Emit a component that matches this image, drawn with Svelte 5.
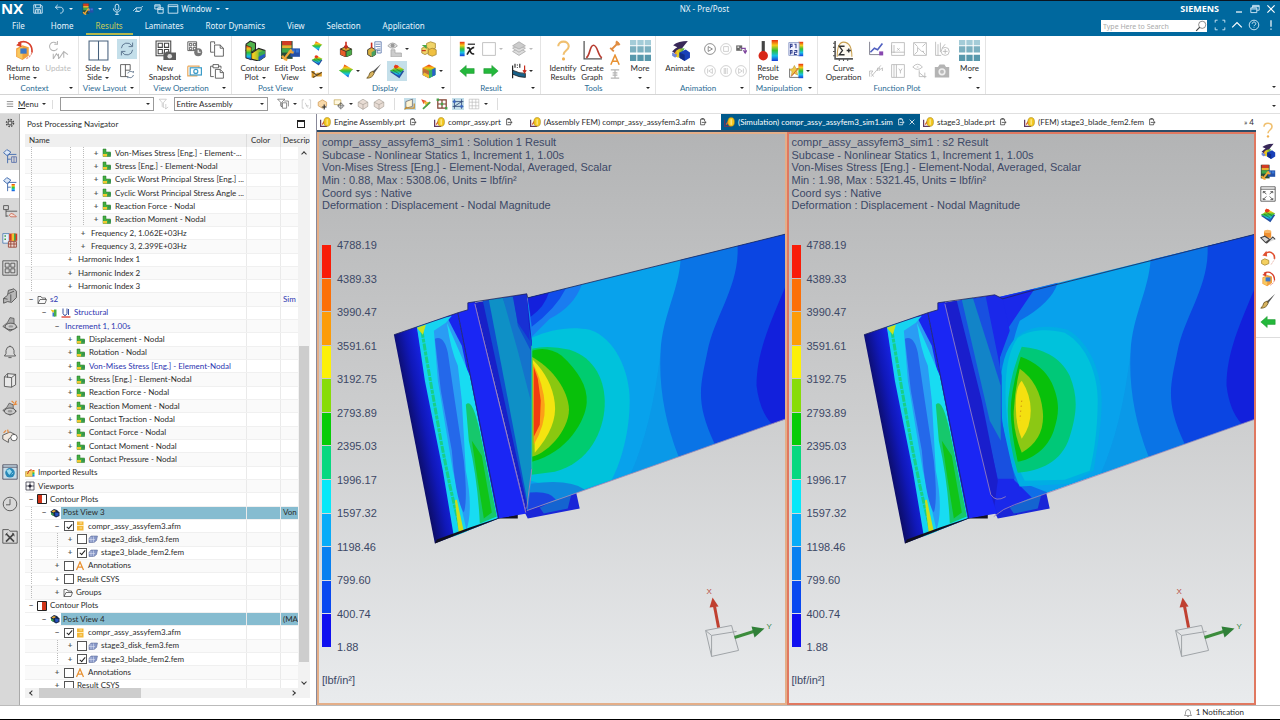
<script>
	const icons = {
		// title bar
		save: '<path class="w" d="M3 3h12l2 2v12H3zM6 3v5h8V3M6 17v-6h8v6M8 13h4M8 15h4"/>',
		undo: '<path class="w" d="M8 3L4 7l4 4M4 7h8c4 0 5 3 5 5s-1 5-5 5"/>',
		mic: '<rect class="w" x="7" y="2" width="6" height="10" rx="3"/><path class="w" d="M4 9c0 8 12 8 12 0M10 15v4M7 19h6"/>',
		touch: '<path class="w" d="M2 13l5-5h8l3-3M7 8c-1 8 8 8 9 1M5 14h7"/>',
		windows: '<path class="w" d="M3 3h9v7H3zM3 5h9M8 8h9v9H8zM8 11h9"/>',
		window: '<path class="w" d="M2 3h16v14H2zM2 6h16"/>',
		restore: '<path class="w" d="M3 8h10v8H3zM6 8V4h11v8h-4M3 10h10M6 6h11"/>',
		close: '<path class="w2" d="M4 4l12 12M16 4L4 16"/>',
		minimize: '<path class="w2" d="M5 15h10"/>',
		full: '<path class="w" d="M2 6V2h4M14 2h4v4M18 14v4h-4M6 18H2v-4"/>',
		up: '<path class="w2" d="M2 14l8-8 8 8"/>',
		help: '<circle class="w" cx="10" cy="10" r="8"/><path class="w" d="M7 8c0-4 6-4 6 0 0 2-3 2-3 4M10 14v1"/>',
		alert: '<path class="w2" d="M10 2v11M10 16v2"/>',
		search: '<circle class="k" cx="12" cy="8" r="6"/><path class="k" stroke-width="2" d="M8 12l-6 6"/>',
		// ribbon
		home: '<path d="M3 8l6-3 6 2v8l-6 4-6-3z" fill="#f2a03c"/><path d="M4 9l5-3v12l-5-2z" fill="#f8c860"/><path d="M7 8h6v5H7z" fill="#3c78c8"/><path d="M5 3c7-4 14 1 13 9" fill="none" stroke="#d8402c" stroke-width="1.6"/><path d="M3 5l5-4v6z" fill="#d8402c"/><path d="M18 12c-1 3-3 5-6 6" fill="none" stroke="#e89080" stroke-width="1.2" stroke-dasharray="2 1"/>',
		update: '<path class="g" d="M8 3A4 4 0 1 0 9 8M9 1v3H6M5 18l3-5 3 4 4-6 4 3M5 13v5M10 13v5M15 11v6"/>',
		side: '<path class="b" d="M1 1h18v18H1zM10 1v18"/>',
		refresh: '<path class="b" d="M3 9a7 7 0 0 1 13-3M17 2v5h-5M17 11a7 7 0 0 1-13 3M3 18v-5h5"/>',
		layout: '<path class="k" d="M11 17H2V2h12v7M8 2v15M8 9h6"/><path class="b" d="M11 13c1-3 5-3 7-1v-2M18 15c-1 4-5 4-7 2v2"/>',
		snapshot: '<path class="k" d="M1 1h14v14H1zM3 3h4v4H3zM9 3h4v4H9zM3 9h4v4H3zM9 9h4v4H9z"/><path d="M8 12h2l1-1h3l1 1h5v7H8z" fill="#5c5c5c"/><circle cx="14" cy="15.500" r="2.200" fill="#ddd"/>',
		gridclock: '<path class="k" d="M1 1h11v11H1zM3 3h3v3H3zM8 3h3v3H8zM3 8h3v3H3zM8 8h3v3H8z"/><circle cx="14" cy="14" r="5" fill="#777"/><path d="M14 11v3h3" fill="none" stroke="#fff" stroke-width="1.400"/>',
		camframe: '<path d="M1 4h14v2M1 4v12h12" fill="none" stroke="#e8a85c" stroke-width="1.500"/><rect x="4" y="6" width="14" height="9" fill="#fff" stroke="#3c9cc8" stroke-width="1.500"/><circle cx="11" cy="10.500" r="2.500" fill="none" stroke="#3c9cc8" stroke-width="1.500"/>',
		copy: '<path class="k" d="M7 4V1H2v13h4M7 5h7l4 4v10H7zM14 5v4h4"/>',
		paste: '<path class="k" d="M6 17H2V4h3M12 4h3v3M5 2h7v4H5zM8 8h6l4 4v7H8zM14 8v4h4"/>',
		contour: '<path d="M1 4l4-3 5 2v6l-4 3-5-2z" fill="#52b44c" stroke="#222"/><path d="M1 10l6 2 6-4 6 2v6l-6 4-12-3z" fill="url(#hot)" stroke="#222"/><path d="M1 5l5 2v12l-5-2z" fill="url(#rain)" stroke="#222" stroke-width=".6"/><path d="M13 12l6-2v6l-6 4z" fill="#38a850"/><path d="M13 20v-4l6-3v3z" fill="#2458c8"/>',
		edit: '<path d="M1 1h11v17H1z" fill="#284c3c"/><path d="M2 1h9v4H2z" fill="#d03c24"/><path d="M2 5h9v3H2z" fill="#e8b030"/><path d="M2 8h9v4H2z" fill="#40a848"/><path d="M10 8h9v8h-9z" fill="#2450a8"/><path d="M11 9h3v3h-3zM15 9h3v3h-3z" fill="#3878d8"/><path d="M11 9L4 18M4 18l-2-3M4 18l3 1M8 11l5 1" stroke="#f0a838" stroke-width="2.200" fill="none"/>',
		surf: '<path d="M1 9q5 0 7-7l11 6q-4 2-6 10z" fill="url(#rain)"/>',
		surfdark: '<path d="M1 11l12 8 6-9-6-3z" fill="#2450a0"/><path d="M1 9q5 0 7-7l11 6q-4 2-6 9z" fill="url(#rain)"/><path d="M5 9l8 5M7 6l8 5" stroke="#305030" stroke-width=".7"/><ellipse cx="9" cy="4.500" rx="3" ry="2" fill="#e83c1c"/>',
		tools: '<path d="M1 5h5v11H1zM9 8h9v6H9z" fill="#d89828"/><path d="M1 6l9 6 8-5M3 16l7-4" stroke="#604820" stroke-width="2" fill="none"/>',
		box: '<path d="M3 10l7-3 7 3v7l-7 3-7-3z" fill="#d8a830" stroke="#222"/><path d="M10 13v7l-7-3v-7z" fill="#e85c28"/><path d="M10 13v7l7-3v-7z" fill="#48a848"/><path d="M3 10l7 3 7-3M10 13v7" stroke="#222" fill="none"/><path d="M10 1v7M8 6l2 3 2-3" stroke="#c82c1c" stroke-width="2" fill="none"/>',
		boxlist: '<path d="M2 11l5-3 5 3v6l-5 3-5-3z" fill="#d8b040" stroke="#222"/><path d="M7 14v6l5-3v-6z" fill="#48a060"/><path d="M7 2v7" stroke="#c82c1c" stroke-width="2"/><path d="M11 1h8v14h-5v-4h-3z" fill="#fff" stroke="#5070a8"/><path d="M12 4h6M12 7h6M14 10h4M14 12h4" stroke="#5070a8"/>',
		eyebox: '<path d="M1 6q6-7 12 0-6 6-12 0z" fill="#e4e4e4" stroke="#999"/><circle cx="7" cy="5.500" r="2.500" fill="#999"/><path d="M5 11h5v4h8v5H5z" fill="#ccc" stroke="#aaa"/>',
		cubes: '<path d="M7 3l5-2 6 2v6l-6 2-5-2z" fill="#f0d468" stroke="#a88830"/><path d="M9 11l5-2 5 2v6l-5 2-5-2z" fill="#f0c040" stroke="#a88830"/><path d="M1 9l4-2 4 2v6l-4 2-4-2z" fill="#f0d468" stroke="#a88830"/><path d="M1 5l6 5v-5z" fill="#48a848"/><path d="M1 12h5" stroke="#c83c1c" stroke-width="1.500"/>',
		brush: '<path d="M19 1L8 11l2 2z" fill="#555"/><path d="M9 10L5 12q-1 4-4 7 7 0 9-6z" fill="#d8b460" stroke="#665020"/>',
		cube: '<path d="M2 6l8-4 8 4v9l-8 4-8-4z" fill="url(#rain)"/><path d="M2 6l8 4v9l-8-4z" fill="#e85030" opacity=".75"/><path d="M10 10l8-4v9l-8 4z" fill="#38b060"/><path d="M4 12l6 3v4l-8-4z" fill="#f0c030"/><path d="M14 8l4-2v9l-4 2z" fill="#2860c8"/>',
		xbar: '<path d="M1 1h6v18H1z" fill="url(#rain)"/><path d="M11 4h9" stroke="#222" stroke-width="1.500"/><path d="M10 9q3-2 4 3t5 4M19 8q-4 0-9 9" stroke="#222" stroke-width="2" fill="none"/>',
		square: '<path class="g" d="M2 2h16v16H2z"/>',
		layers: '<path d="M2 13l8-4 8 4-8 5z" fill="#ddd" stroke="#aaa"/><path d="M2 9l8-4 8 4-8 5z" fill="#ddd" stroke="#aaa"/><path d="M2 6l8-5 8 5-8 4z" fill="#ccc" stroke="#aaa"/>',
		left: '<path d="M1 10l8-7v4h10v6H9v4z" fill="#24b83c" stroke="#189028" stroke-width=".6"/>',
		right: '<path d="M19 10l-8-7v4H1v6h10v4z" fill="#24b83c" stroke="#189028" stroke-width=".6"/>',
		beam: '<path d="M2 3v16" stroke="#222" stroke-width="1.500"/><path d="M2 9q8 4 16 4v5q-8 0-16-4z" fill="#186088" stroke="#222"/><path d="M5 1v5M8 2v1M8 5v1M11 1v5" stroke="#333" stroke-width="1.500"/><path d="M17 3v8M15 9l2 3 2-3" stroke="#c82c1c" stroke-width="1.500" fill="none"/>',
		question: '<path d="M5 6c0-6 10-6 10 0 0 4-5 4-5 8" fill="none" stroke="#f0c070" stroke-width="2"/><circle cx="10" cy="18" r="1.500" fill="#f0b050"/>',
		graph: '<path d="M2 1v17h17" fill="none" stroke="#555" stroke-width="1.200"/><path d="M4 17C8 15 7 5 11 5s4 10 8 12" fill="none" stroke="#b83c30" stroke-width="1.600"/>',
		measure: '<path d="M5 15L15 5M2 13l6 6M12 2l6 6M11 5l4 0v4" fill="none" stroke="#e08c40" stroke-width="3"/>',
		letter: '<path d="M3 18l7-16 7 16M6 12h8" fill="none" stroke="#e89030" stroke-width="2.500"/>',
		ibeam: '<path class="g" stroke-width="2" d="M3 3h14M3 17h14M10 3v14M6 8h8M6 12h8"/>',
		more: '<path d="M0 0h6v5H0zM7 0h6v5H7zM14 0h6v5h-6z" fill="#a4ccd8"/><path d="M0 6h6v6H0zM7 6h6v6H7zM14 6h6v6h-6z" fill="#7cb0c0"/><path d="M0 14h6v6H0zM7 14h6v6H7zM14 14h6v6h-6z" fill="#5898ac"/>',
		animate: '<path d="M3 5q5-4 14-4l-4 5-6 8-5-3q3-3 5-4z" fill="#382858"/><path d="M6 10q4-3 8-2l-6 9-5-2z" fill="url(#hot)"/><path d="M2 12l5 2-2 3-3-2z" fill="#7088d8"/><path d="M9 12l6-3 4 3v5l-5 3-5-3z" fill="#1840b8"/><path d="M9 12l5 2v6l-5-3z" fill="#102c88"/>',
		play: '<circle class="k" cx="10" cy="10" r="9"/><path class="k" d="M7 6l7 4-7 4z"/>',
		stop: '<circle class="g" cx="10" cy="10" r="9"/><path class="g" d="M6 6h8v8H6z"/>',
		film: '<path d="M2 4h10v9H2z" fill="#666"/><path d="M4 6h3v2H4zM8 9h3v2H8z" fill="#fff"/><path d="M10 9h7v6M14 12l3 5 3-5" stroke="#8048a0" stroke-width="2" fill="none"/>',
		prev: '<circle class="g" cx="10" cy="10" r="9"/><path class="g" d="M6 6v8M14 6l-6 4 6 4z"/>',
		pause: '<circle class="g" cx="10" cy="10" r="9"/><path class="g" d="M7 5v10M9 5v10M12 5v10"/>',
		next: '<circle class="g" cx="10" cy="10" r="9"/><path class="g" d="M14 6v8M6 6l6 4-6 4z"/>',
		probe: '<path d="M13 0h6v20h-6z" fill="url(#rain)"/><path d="M5 1v12" stroke="#444" stroke-width="3"/><circle cx="5" cy="15" r="4.500" fill="#d82818"/>',
		pfilter: '<path d="M13 1h6v18h-6z" fill="url(#rain)"/><path d="M1 2h13v16H1z" fill="#f4f4ff" stroke="#8090c0"/><path d="M3 9V4h2v3H3M8 4h2v5M3 17v-5h2v3H3M8 12h3v2H8v3h3" stroke="#304090" stroke-width="1.300" fill="none"/>',
		pstar: '<path d="M13 1h6v18h-6z" fill="url(#rain)"/><path d="M2 7v11h12" stroke="#555" fill="none"/><path d="M8 3l2 4 4 0-3 3 1 5-4-2-4 3 1-5-3-3 4-1z" fill="#f0c848" stroke="#a88828" stroke-width=".6"/><path d="M4 17l9-11" stroke="#c84c28"/>',
		curve: '<path d="M2 1v17h17" fill="none" stroke="#555" stroke-width="1.500"/><path d="M0 3h2M0 7h2M0 11h2M0 15h2M6 18v2M10 18v2M14 18v2" stroke="#555"/><path d="M4 16C4 8 5 2 10 2s8 4 8 14" fill="#fffaf0" stroke="#c8a050"/><path d="M11 6H6l3 4-3 4h5M13 10h4M15 8v4" fill="none" stroke="#333" stroke-width="1.300"/>',
		trend: '<path d="M2 1v16h16" fill="none" stroke="#667"/><path d="M3 14l5-5 4 2 6-8" fill="none" stroke="#5060c0" stroke-width="2"/><path d="M14 13h5v5h-5z" fill="#8848b0"/>',
		boxx: '<path class="g" d="M2 2h16v16H2zM2 5v10M5 5v10M2 14h16M9 9l3 3M12 9l-3 3"/>',
		boxn: '<path class="g" d="M2 2h16v16H2zM3 3l4 4M17 3l-4 4M3 17l4-4M17 17l-4-4M7 13V8l5 5h3"/>',
		drop: '<path class="g" d="M2 1v17h7M5 4v14M8 2v12M14 4l-4 5"/><circle class="g" cx="14" cy="13" r="5"/><path class="g" d="M14 10v6M11 13h6"/>',
		ratio: '<path class="g" d="M4 17L16 3M2 17v-7h4l-2 3 3 4M12 10V6M14 10V6l2 2 2-2v4"/>',
		boxy: '<path class="g" d="M2 2h16v16H2zM5 2v16M8 2v16M11 7l2 3 2-3M13 10v3"/>',
		eyeaxis: '<path class="g" d="M1 5q6-7 12 0-6 6-12 0zM6 5h2M9 9v8h9M9 12l6 5M16 12v7"/>',
		camera: '<path d="M1 5h4l2-3h6l2 3h4v13H1z" fill="#b4b4b4"/><circle cx="10" cy="11" r="4.500" fill="#eee"/><circle cx="10" cy="11" r="2.500" fill="#bbb"/>',
		// selection bar
		burger: '<path class="k" stroke-width="1.500" d="M2 4h16M2 10h16M2 16h16"/>',
		funnel: '<path class="g" d="M2 2h12l-5 6v8l-2-2V8zM13 10v8M11 16l2 2 4-3"/>',
		funnel2: '<path class="k" d="M1 2h12l-5 5v8l-2-2V7zM9 8h7v9H9zM12 5h7v9"/>',
		bracket: '<path class="g" d="M5 3H2v14h3M13 3h3v14h-3M7 8l4 8M8 13h5"/>',
		ocube: '<path d="M2 7l7-4 7 4v6l-7 4-7-4z" fill="#f8d8a8" stroke="#c88838"/><path d="M12 11v8M8 15h8" stroke="#333" stroke-width="2"/>',
		target: '<path d="M2 3h11v8H2z" fill="#fff8e0" stroke="#b89838"/><circle class="k" cx="13" cy="13" r="4"/><path class="k" d="M13 7v12M7 13h12"/>',
		gcube: '<path d="M2 7l8-5 8 5v7l-8 5-8-5z" fill="#e8dcd4" stroke="#a09890"/><path d="M2 7l8 4 8-4M10 11v8" stroke="#a09890" fill="none"/>',
		sketch: '<path d="M3 17V6l11-4v12z" fill="#fdf4d4" stroke="#445"/><path d="M3 17h14V9M1 19l4-4" stroke="#c88c28" stroke-width="2" fill="none"/>',
		pen: '<path d="M2 2l9 3-5 5z" fill="#e85030"/><path d="M6 6l11 1-6 8z" fill="#f0c040"/><path d="M5 18l12-11" stroke="#48a048" stroke-width="3"/>',
		redgrid: '<path d="M3 3h14v14H3zM3 10h14M10 3v14" stroke="#804030" stroke-width="2" fill="none"/><path d="M1 1h4v4H1zM8 8h4v4H8zM15 15h4v4h-4z" fill="#48a048"/>',
		nodes: '<path d="M4 2v16M16 2v16M1 6h18M1 14h18M4 14l12-8" stroke="#304878" stroke-width="1.400" fill="none"/><path d="M2 4h4v4H2zM14 12h4v4h-4z" fill="#3868c8"/>',
		dots: '<path class="g" d="M2 2h16v16H2zM7 2v16M13 2v16M2 7h16M2 13h16"/>',
		// document tabs
		doc: '<path d="M1 5v12h12" stroke="#603860" stroke-width="2.500" fill="none"/><path d="M4 14l4-6 3 4" stroke="#e06030" stroke-width="2.500" fill="none"/><ellipse cx="13" cy="9" rx="6" ry="8" fill="#f4c820" stroke="#a08018"/><path d="M13 4v10" stroke="#fff0a0" stroke-width="2"/>',
		modified: '<path fill="none" stroke="currentColor" stroke-width="1.800" d="M14 8V3H4v14h10v-3M7 11h10M14 8l4 3-4 3M7 3v-2h4v2"/>',
		// resource bar
		gear: '<circle class="k" stroke-width="2" cx="10" cy="10" r="4"/><circle class="k" cx="10" cy="10" r="7" stroke-width="3" stroke-dasharray="3 2.500"/>',
		nav: '<path d="M2 6l4-4 5 3-4 5z" fill="#dce8f8" stroke="#4870b0" stroke-width="1.200"/><path d="M7 9v10M7 8h11M7 14h4" fill="none" stroke="#4870b0" stroke-width="1.200"/><path d="M12 11h6v7h-6zM15 11v7" fill="none" stroke="#5068a8"/>',
		navpost: '<path d="M2 6l4-4 5 3-4 5z" fill="#dce8f8" stroke="#4870b0" stroke-width="1.200"/><path d="M7 9v10M7 8h11M7 14h4" fill="none" stroke="#4870b0" stroke-width="1.200"/><path d="M12 10h4v9h-4z" fill="url(#rain)"/>',
		navpart: '<path class="k" d="M2 2h6v5H2zM5 7v9M5 9h14M5 15h3"/><path d="M9 14q2-4 6-1l3 3h-7z" fill="#f4dcd4" stroke="#c86048"/>',
		palette: '<path d="M1 2h8v12H1z" fill="#e8f0f8" stroke="#4878b0"/><path d="M3 4h2v2H3zM3 8h2v2H3z" fill="#48a048"/><path d="M9 2h10v9H9z" fill="#d83820"/><path d="M12 2h3v9h-3z" fill="#f0c030"/><path d="M15 2h2v9h-2z" fill="#40a848"/><path d="M8 12h10v7H8zM11 12v7M15 12v7M8 15h10" fill="#f0d8d0" stroke="#903828"/>',
		tiles: '<path class="k" d="M1 1h18v18H1zM4 4h5v5H4zM11 4h5v5h-5zM4 11h5v5H4zM11 11h5v5h-5z"/>',
		parts: '<path d="M8 3l7-2 3 3v8l-6 6-5-1-5 2v-6l5-4z" fill="#b8b8b8" stroke="#444"/><path d="M8 7l7-3M11 8v9M2 13l5 1" stroke="#444" fill="none"/>',
		reuse: '<path d="M1 13Q8 9 10 2l5 1v8l4 3-9 5z" fill="#a8a8a8" stroke="#555"/><ellipse cx="11" cy="13" rx="7" ry="4" fill="#ccc" stroke="#444"/><ellipse cx="11" cy="13" rx="3" ry="1.500" fill="#999"/>',
		bell: '<path class="k" d="M10 2v1M3 15h14l-2-3V8q-1-5-5-5T5 8v4zM8 17h4"/>',
		book: '<path d="M3 6l4-4 10 1v13l-5 3-9-1zM3 6l9 1v12M12 7l5-4M7 2v5" fill="#e8e8e8" stroke="#444"/>',
		reuse2: '<path d="M1 13Q7 10 9 4l5 2v5l4 3-8 5z" fill="#b0b0b0" stroke="#555"/><ellipse cx="10" cy="14" rx="7" ry="4" fill="#ccc" stroke="#444"/><ellipse cx="10" cy="14" rx="3" ry="1.500" fill="#999"/><path d="M12 1l3 3M18 1l-2 4M14 6l5-1" stroke="#e88838" stroke-width="1.500"/>',
		lens: '<path d="M1 9l9-4 6 3-8 6v4l-7-4z" fill="#f0e8e0" stroke="#444"/><circle cx="15" cy="12" r="4" fill="#fff" stroke="#444"/><path d="M2 6l3-3M7 2l1 4" stroke="#e88838" stroke-width="1.500"/>',
		globe: '<path d="M1 1h18v18H1z" fill="#c8dce8" stroke="#445"/><path d="M1 4h18" stroke="#445"/><circle cx="10" cy="11" r="6" fill="#2888b8"/><path d="M6 8l4-1 2 3-3 3zM12 13l2-2" fill="#9cdcf0" stroke="#9cdcf0"/>',
		clock: '<circle class="k" cx="10" cy="10" r="8.500"/><path class="k" d="M10 4v7H5"/>',
		wrench: '<path class="k" d="M1 5V2h7l2 2h9v15H1z"/><path class="k" stroke-width="2" d="M5 7l10 10M15 7L5 17"/><path class="k" d="M13 6q0 3 3 4M4 9l3-3"/>',
		fit: '<path class="k" d="M1 1h18v18H1zM1 4h18M4 7l4 3M16 7l-4 3M4 17l4-4M16 17l-4-4M4 9V7h3M16 9V7h-3M4 15v2h3M16 15v2h-3"/>',
		cylinder: '<path d="M5 3h9v8H5z" fill="#f09030"/><ellipse cx="9.500" cy="3" rx="4.500" ry="2" fill="#f8b868"/><path d="M1 11l5-2 6 4-5 4zM8 18l8-8 3 3" fill="#d8d8d8" stroke="#444" stroke-width="1.300"/>',
		undocube: '<path d="M2 13l4-2 5 2v4l-5 2-4-2z" fill="#f4d060" stroke="#a88830"/><path d="M6 6c5-7 13-2 12 5" fill="none" stroke="#e05030" stroke-width="2"/><path d="M3 7l5-6 1 7z" fill="#e05030"/><path d="M18 12l-4 6" stroke="#c84c30" stroke-dasharray="1 2"/>',
		// tree
		result: '<path d="M2 2h6v6h9v9H2z" fill="#44b040" stroke="#207028"/><path d="M2 12h8v5H2z" fill="#f0c830"/><path d="M12 10h6v5h-6z" fill="#389050"/>',
		folder: '<path class="k" stroke-width="1.500" d="M2 17V3h6l2 3h7v3M2 17l4-8h13l-3 8z"/>',
		structural: '<path d="M1 3l8 2-3 5z" fill="#f0c020"/><path d="M5 9h5v8H5z" fill="#3c78d0"/><path d="M8 3h5v14H8z" fill="#48b048"/>',
		curveicon: '<path d="M4 1v10q4 8 8 0V1M15 2v12" fill="none" stroke="#3850a0" stroke-width="2"/><path d="M1 18h18" stroke="#d83020" stroke-width="2.500"/>',
		imported: '<path d="M1 7h7l2-2h5v12H1z" fill="#f4d060" stroke="#a88830"/><path d="M15 4h4v13h-4z" fill="url(#rain)"/><path d="M5 12q1-8 8-9" stroke="#c83828" stroke-width="2" fill="none"/>',
		viewports: '<path d="M2 2h16v16H2zM10 2v16M2 10h16" fill="none" stroke="#334" stroke-width="1.500"/><path d="M10 7v6M7 10h6" stroke="#223" stroke-width="3"/>',
		plotl: '<path d="M1 1h18v18H1z" fill="#fff" stroke="#222" stroke-width="2"/><path d="M2 2h8v16H2z" fill="#d03418"/>',
		plotr: '<path d="M1 1h18v18H1z" fill="#fff" stroke="#222" stroke-width="2"/><path d="M10 2h8v16h-8z" fill="#d03418"/>',
		postview: '<path d="M1 7l7-5 6 2 5 5v7l-7 3-8-5z" fill="#182848"/><path d="M3 7l5-3 4 2-5 3z" fill="#e8a830"/><path d="M2 9l5 2v5l-5-3z" fill="#38a050"/><path d="M10 9l7 1v5l-6 2z" fill="#2450c0"/>',
		afm: '<path d="M4 1h13v8H4zM4 10h13v9H4z" fill="#f4b838"/><path d="M4 9h13M9 4h5M9 14h5" stroke="#fff0c0" stroke-width="1.600"/>',
		fem: '<path d="M2 9l4-5h13l-2 9-5 4H2z" fill="#8898c8" stroke="#506090"/><path d="M2 11h12M6 6v10M11 5v12" stroke="#e8ecf8"/>'
	};

	const menus = ['File', 'Home', 'Results', 'Laminates', 'Rotor Dynamics', 'View', 'Selection', 'Application'];

	// text = large button, icon only = small button, stack = narrow column
	const groups = [
		{ id: 'context', label: 'Context', items: [{ icon: 'home', text: ['Return to', 'Home'], caret: true }, { icon: 'update', text: ['Update'], off: true }] },
		{ id: 'layout', label: 'View Layout', items: [{ icon: 'side', text: ['Side by', 'Side'], caret: true }, { icon: 'refresh', on: true }, { icon: 'layout' }] },
		{ id: 'operation', label: 'View Operation', items: [{ icon: 'snapshot', text: ['New', 'Snapshot'] }, { icon: 'gridclock' }, { icon: 'camframe' }, { icon: 'copy' }, { icon: 'paste' }] },
		{ id: 'post', label: 'Post View', items: [{ icon: 'contour', text: ['Contour', 'Plot'], caret: true }, { icon: 'edit', text: ['Edit Post', 'View'] }, { stack: ['surf', 'surfdark', 'tools'] }] },
		{
			id: 'display',
			label: 'Display',
			items: [{ icon: 'box' }, { icon: 'surf', caret: true }, { icon: 'boxlist' }, { icon: 'brush' }, { icon: 'eyebox', caret: true }, { icon: 'surfdark', on: true }, { icon: 'cubes' }, { icon: 'cube', caret: true }]
		},
		{ id: 'result', label: 'Result', items: [{ icon: 'xbar' }, { icon: 'left' }, { icon: 'square', caret: true, off: true }, { icon: 'right' }, { icon: 'layers', caret: true, off: true }, { icon: 'beam', caret: true }] },
		{
			id: 'tools',
			label: 'Tools',
			items: [{ icon: 'question', text: ['Identify', 'Results'] }, { icon: 'graph', text: ['Create', 'Graph'] }, { stack: ['measure', 'letter', 'ibeam'] }, { icon: 'more', text: ['More', ''], caret: true }]
		},
		{ id: 'animation', label: 'Animation', items: [{ icon: 'animate', text: ['Animate'] }, { icon: 'play' }, { icon: 'prev' }, { icon: 'stop' }, { icon: 'pause' }, { icon: 'film' }, { icon: 'next' }] },
		{ id: 'manipulation', label: 'Manipulation', items: [{ icon: 'probe', text: ['Result', 'Probe'] }, { icon: 'pfilter' }, { icon: 'pstar', caret: true }] },
		{
			id: 'function',
			label: 'Function Plot',
			items: [
				{ icon: 'curve', text: ['Curve', 'Operation'] },
				{ icon: 'trend' }, { icon: 'ratio' }, { icon: 'boxx' }, { icon: 'boxy' },
				{ icon: 'boxn' }, { icon: 'eyeaxis' }, { icon: 'drop' }, { icon: 'camera' },
				{ icon: 'more', text: ['More', ''], caret: true }
			]
		}
	];

	const docs = [
		{ name: 'Engine Assembly.prt' },
		{ name: 'compr_assy.prt' },
		{ name: '(Assembly FEM) compr_assy_assyfem3.afm' },
		{ name: '(Simulation) compr_assy_assyfem3_sim1.sim', active: true },
		{ name: 'stage3_blade.prt' },
		{ name: '(FEM) stage3_blade_fem2.fem' }
	];

	const resources = ['nav', 'navpost', 'navpart', 'palette', 'tiles', 'parts', 'reuse', 'bell', 'book', 'reuse2', 'lens'];
	const shortcuts = ['question', 'animate', 'edit', 'fit', 'surfdark', 'cylinder', 'undocube', 'home', 'brush', 'left'];

	const res = (level, name, extra = {}) => ({ level, name, exp: '+', icons: ['result'], ...extra });
	const postView = (name, desc) => [
		{ level: 1, name, exp: '−', icons: ['postview'], selected: true, desc },
		{ level: 2, name: 'compr_assy_assyfem3.afm', exp: '−', check: true, icons: ['afm'] },
		{ level: 3, name: 'stage3_disk_fem3.fem', exp: '+', check: false, icons: ['fem'] },
		{ level: 3, name: 'stage3_blade_fem2.fem', exp: '+', check: true, icons: ['fem'] },
		{ level: 2, name: 'Annotations', exp: '+', check: false, icons: ['letter'] },
		{ level: 2, name: 'Result CSYS', exp: '+', check: false }
	];

	let rows = [
		res(5, 'Von-Mises Stress [Eng.] - Element-...'),
		res(5, 'Stress [Eng.] - Element-Nodal'),
		res(5, 'Cyclic Worst Principal Stress [Eng.] ...'),
		res(5, 'Cyclic Worst Principal Stress Angle ...'),
		res(5, 'Reaction Force - Nodal'),
		res(5, 'Reaction Moment - Nodal'),
		{ level: 4, name: 'Frequency 2, 1.062E+03Hz', exp: '+' },
		{ level: 4, name: 'Frequency 3, 2.399E+03Hz', exp: '+' },
		{ level: 3, name: 'Harmonic Index 1', exp: '+' },
		{ level: 3, name: 'Harmonic Index 2', exp: '+' },
		{ level: 3, name: 'Harmonic Index 3', exp: '+' },
		{ level: 0, name: 's2', exp: '−', icons: ['folder'], blue: true, desc: 'Sim' },
		{ level: 1, name: 'Structural', exp: '−', icons: ['structural', 'curveicon'], blue: true },
		{ level: 2, name: 'Increment 1, 1.00s', exp: '−', blue: true },
		res(3, 'Displacement - Nodal'),
		res(3, 'Rotation - Nodal'),
		res(3, 'Von-Mises Stress [Eng.] - Element-Nodal', { blue: true }),
		res(3, 'Stress [Eng.] - Element-Nodal'),
		res(3, 'Reaction Force - Nodal'),
		res(3, 'Reaction Moment - Nodal'),
		res(3, 'Contact Traction - Nodal'),
		res(3, 'Contact Force - Nodal'),
		res(3, 'Contact Moment - Nodal'),
		res(3, 'Contact Pressure - Nodal'),
		{ level: -1, name: 'Imported Results', icons: ['imported'] },
		{ level: -1, name: 'Viewports', icons: ['viewports'] },
		{ level: 0, name: 'Contour Plots', exp: '−', icons: ['plotl'] },
		...postView('Post View 3', 'Von'),
		{ level: 2, name: 'Groups', exp: '+', icons: ['folder'] },
		{ level: 0, name: 'Contour Plots', exp: '−', icons: ['plotr'] },
		...postView('Post View 4', '(MA')
	];

	// a guide is drawn while a later sibling exists on that level
	const hasLine = (index, level) => {
		const next = rows.slice(index + 1).find((r) => r.level <= level);
		return next ? next.level === level : false;
	};

	const legend = ['4788.19', '4389.33', '3990.47', '3591.61', '3192.75', '2793.89', '2395.03', '1996.17', '1597.32', '1198.46', '799.60', '400.74', '1.88'];

	const views = [
		{
			id: 'solution',
			lines: ['compr_assy_assyfem3_sim1 : Solution 1 Result', 'Subcase - Nonlinear Statics 1, Increment 1, 1.00s', 'Von-Mises Stress [Eng.] - Element-Nodal, Averaged, Scalar', 'Min : 0.88, Max : 5308.06, Units = lbf/in²', 'Coord sys : Native', 'Deformation : Displacement - Nodal Magnitude']
		},
		{
			id: 's2',
			lines: ['compr_assy_assyfem3_sim1 : s2 Result', 'Subcase - Nonlinear Statics 1, Increment 1, 1.00s', 'Von-Mises Stress [Eng.] - Element-Nodal, Averaged, Scalar', 'Min : 1.98, Max : 5321.45, Units = lbf/in²', 'Coord sys : Native', 'Deformation : Displacement - Nodal Magnitude']
		}
	];
</script>

{#snippet icon(name)}
	<svg class="icon" viewBox="0 0 20 20" aria-hidden="true">{@html icons[name]}</svg>
{/snippet}

{#snippet blade()}
	<path fill="#08a2ec" d="M528 297L787 233V418L527 510z" />
	<path fill="#0b90e4" d="M631 473C646 440 655 400 661 352L690 440 679 456z" opacity=".5" />
	<path fill="#0a74e6" d="M681 259C679 290 663 315 661 350S665 420 679 456L787 418V233z" />
	<path fill="#0b45e2" d="M738 245C740 285 715 315 708 350S695 400 715 443L787 418V233z" />
	<path fill="#1220dc" d="M787 283C772 320 757 350 757 385Q760 410 772 423L787 418z" />
{/snippet}

{#snippet slab()}
	<path fill="url(#slab)" d="M394 334L458 312 499 518 435 543z" />
	<path fill="#2a9cf4" d="M417 326L447 316 462 345 498 518 458 534 440 450z" />
	<path fill="#16d4f0" d="M417 326L452 315 446 322 434 330 438 380 453 470 467 531 454 536 443 470 425 380z" />
	<path fill="#2468ea" d="M435 338Q444 334 448 352L455 400 464 460Q468 500 464 512 456 500 452 450L441 390z" />
	<path fill="#18dcf2" d="M447 322Q451 350 458 365L462 400 466 470Q474 510 466 531L498 518 470 375z" />
	<path fill="#16c86c" d="M466 404Q473 395 482 440L497 516 480 523Q478 480 469 440z" />
	<path fill="#10c418" d="M472 440L482 455 492 512 484 518 478 480z" />
	<path fill="none" stroke="#18d088" stroke-width="3" stroke-dasharray="7 1 4 1" d="M422 330L427 360 434 400 441 440 450 485 461 532" />
	<path fill="#c8e020" d="M417 327L426 324 423 334zM455 500L457 499 464 531 459 533z" />
	<path fill="#101020" d="M435 543L499 518H518V514L500 517 470 527 437 539z" />
{/snippet}

<svg class="defs" aria-hidden="true">
	<defs>
		<linearGradient id="rain" x2="0" y2="1">
			<stop offset="0" stop-color="#e82c10" />
			<stop offset=".25" stop-color="#f8c818" />
			<stop offset=".5" stop-color="#30c038" />
			<stop offset=".75" stop-color="#18c0e8" />
			<stop offset="1" stop-color="#1838d8" />
		</linearGradient>
		<linearGradient id="hot">
			<stop offset="0" stop-color="#e86018" />
			<stop offset=".4" stop-color="#f0d020" />
			<stop offset="1" stop-color="#30a848" />
		</linearGradient>
		<linearGradient id="slab" gradientUnits="userSpaceOnUse" x1="412" y1="440" x2="450" y2="432">
			<stop offset="0" stop-color="#0c0c60" />
			<stop offset=".4" stop-color="#1018b8" />
			<stop offset=".8" stop-color="#1826ee" />
		</linearGradient>
	</defs>
</svg>

<div class="app">
	<header>
		<div class="title">
			<strong class="nx">NX</strong>
			<button aria-label="Save">{@render icon('save')}</button>
			<button aria-label="Undo">{@render icon('undo')}<i class="caret"></i></button>
			<button aria-label="Edit post view">{@render icon('edit')}<i class="caret"></i></button>
			<button aria-label="Command finder">{@render icon('mic')}</button>
			<button aria-label="Touch mode">{@render icon('touch')}</button>
			<button aria-label="Switch window">{@render icon('windows')}</button>
			<button class="window">{@render icon('window')}Window<i class="caret"></i></button>
			<button class="custom" aria-label="Customize"><i class="caret"></i></button>
			<h1>NX - Pre/Post</h1>
			<strong class="brand">SIEMENS</strong>
			<div class="controls">
				<button aria-label="Minimize">{@render icon('minimize')}</button>
				<button aria-label="Restore">{@render icon('restore')}</button>
				<button aria-label="Close">{@render icon('close')}</button>
			</div>
		</div>
		<nav>
			{#each menus as menu}
				<button class:active={menu === 'Results'}>{menu}</button>
			{/each}
			<div class="find">
				<input type="search" aria-label="Search" placeholder="Type Here to Search" />
				{@render icon('search')}
			</div>
			<button class="tool" aria-label="Full screen">{@render icon('full')}</button>
			<button class="tool" aria-label="Minimize ribbon">{@render icon('up')}</button>
			<button class="tool" aria-label="Help">{@render icon('help')}</button>
			<button class="tool" aria-label="Alerts">{@render icon('alert')}</button>
		</nav>
	</header>

	<section class="ribbon">
		{#each groups as group}
			<div class="group {group.id}">
				<div class="body">
					{#each group.items as item}
						{#if item.stack}
							<div class="stack">
								{#each item.stack as name}
									<button aria-label={name}>{@render icon(name)}</button>
								{/each}
							</div>
						{:else if item.text}
							<button class="big" class:off={item.off}>
								{@render icon(item.icon)}
								{#each item.text as line, i}
									<span>{line}{#if item.caret && i === item.text.length - 1}<i class="caret"></i>{/if}</span>
								{/each}
							</button>
						{:else}
							<button class="small" class:on={item.on} class:off={item.off} aria-label={item.icon}>
								<span class="tile">{@render icon(item.icon)}</span>
								{#if item.caret}<i class="caret"></i>{/if}
							</button>
						{/if}
					{/each}
				</div>
				<div class="label"><span>{group.label}</span><i class="caret"></i></div>
			</div>
		{/each}
		<i class="caret end"></i>
	</section>

	<section class="bar">
		<button class="menu">{@render icon('burger')}<span><u>M</u>enu</span><i class="caret"></i></button>
		<div class="pick"><select aria-label="Type filter"><option></option></select><i class="caret"></i></div>
		<button aria-label="Filter">{@render icon('funnel')}</button>
		<div class="pick"><select aria-label="Selection scope"><option>Entire Assembly</option></select><i class="caret"></i></div>
		<button class="first" aria-label="Selection filter">{@render icon('funnel2')}<i class="caret"></i></button>
		<button aria-label="Bracket">{@render icon('bracket')}</button>
		<button aria-label="Add component">{@render icon('ocube')}</button>
		<button aria-label="Target">{@render icon('target')}<i class="caret"></i></button>
		<button aria-label="Body">{@render icon('gcube')}</button>
		<button aria-label="Face">{@render icon('gcube')}</button>
		<hr />
		<button class="on" aria-label="Sketch">{@render icon('sketch')}</button>
		<button aria-label="Highlight">{@render icon('pen')}</button>
		<button aria-label="Mesh">{@render icon('redgrid')}</button>
		<button class="on" aria-label="Nodes">{@render icon('nodes')}</button>
		<button aria-label="Grid">{@render icon('dots')}<i class="caret"></i></button>
		<hr />
		<i class="caret end"></i>
	</section>

	<main>
		<aside class="rail">
			<button class="gear" aria-label="Settings">{@render icon('gear')}</button>
			{#each resources as name}
				<button class:active={name === 'navpost'} aria-label={name}>{@render icon(name)}</button>
			{/each}
			<div class="low">
				<button aria-label="Web">{@render icon('globe')}</button>
				<button aria-label="History">{@render icon('clock')}</button>
				<button aria-label="Roles">{@render icon('wrench')}</button>
			</div>
		</aside>

		<section class="navigator">
			<h2>Post Processing Navigator <button aria-label="Undock"></button></h2>
			<div class="pane">
				<table>
					<thead>
						<tr><th>Name</th><th>Color</th><th>Descrip</th></tr>
					</thead>
					<tbody>
						{#each rows as row, r}
							<tr class:selected={row.selected} class:blue={row.blue}>
								<td>
									{#each { length: Math.max(row.level, 0) } as _, level}
										<span class="guide" class:line={hasLine(r, level)}></span>
									{/each}
									{#if row.exp}<button class="exp" aria-label="Toggle {row.name}">{row.exp}</button>{/if}
									{#if row.check !== undefined}
										<input type="checkbox" bind:checked={row.check} aria-label={row.name} />
									{/if}
									{#if row.icons}
										{#each row.icons as name}{@render icon(name)}{/each}
									{/if}
									<span class="name">{row.name}</span>
								</td>
								<td></td>
								<td>{row.desc ?? ''}</td>
							</tr>
						{/each}
					</tbody>
				</table>
				<div class="vscroll"><b class="up"></b><span></span><b class="down"></b></div>
				<div class="hscroll"><b class="prev"></b><span></span><b class="next"></b></div>
			</div>
		</section>

		<section class="work">
			<div class="docs">
				{#each docs as doc}
					<button class:active={doc.active}>
						{@render icon('doc')}<span>{doc.name}</span>{@render icon('modified')}
						{#if doc.active}{@render icon('close')}{/if}
					</button>
				{/each}
				<span class="rest">» 4</span>
			</div>
			<div class="views">
				{#each views as view}
					<article class={view.id}>
						<svg class="scene" viewBox="317 131 470 574" preserveAspectRatio="xMaxYMin slice" aria-hidden="true">
							<path fill="#1a26d8" d="M524 510L576 490 580 508 528 518z" />
							<path fill="#1464d0" d="M540 507L572 492 568 508 544 513z" />
							{@render blade()}
							{#if view.id === 'solution'}
								<path fill="#1a7cf0" d="M528 297L582 284Q574 306 550 318L532 336z" />
								<path fill="#104cea" d="M528 297L566 288Q556 308 532 326z" />
								<path fill="#1420dc" d="M528 297L549 292Q545 306 531 316z" />
								<path fill="#00c2dc" d="M532 337C550 329 570 325 590 329 615 337 630 370 630 400S622 460 612 479L575 492 531 480z" />
								<path fill="#1088dc" d="M531 483Q570 478 585 489L528 510z" />
								<path fill="#1a44e0" d="M530 492Q550 490 556 499L528 510z" />
								<path fill="#00cc70" d="M532 348Q548 344 570 349C595 357 606 380 605 405S590 462 555 471L532 474z" />
								<path fill="#08c00a" d="M532 350Q548 345 562 355C578 370 588 385 587 402S568 452 532 461z" />
								<path fill="#8ac810" d="M532 356C550 366 566 385 569 405S550 452 532 456z" />
								<path fill="#f4e410" d="M533 359Q552 378 555 402T535 452z" />
								<path fill="#fca018" d="M533 362Q544 384 545 404T534 444z" />
								<path fill="#f03c10" d="M534 366L538 378 541 400 540 424 534 436z" />
								{@render slab()}
								<path fill="#1820c8" d="M475 302L527 293 532 340 532 463 527 513z" />
								<path fill="#104ed0" d="M483 300L524 294 532 345 532 463 528 508z" />
								<path fill="#0e90c6" d="M489 299L503 297 531 372 532 463 528 503z" />
								<path fill="#1474cc" d="M503 297L514 296 518 325 531 350V400L518 350z" />
								<path fill="#1830d4" d="M513 296L527 293 530 340 518 322z" />
								<path fill="#1a26f4" d="M458 312L468 309V302L475 301 500 405 527 513 498 518z" />
								<path fill="none" stroke="#20d0a0" d="M532 345V468" />
								<path fill="none" stroke="#b08cb0" stroke-width=".8" d="M475 303L526 512M532 468L527 508M527 510L787 418" />
								<path fill="none" stroke="#20265c" stroke-width=".8" d="M394 334L458 312 499 518M458 312L468 309V302L527 293 528 297 787 233" />
							{:else}
								<path fill="#0e6ee8" d="M526 297L588 282Q582 302 550 320 540 345 534 400 540 450 560 485L578 492 520 512z" />
								<path fill="#1a28ea" d="M526 297L565 288Q546 316 538 328L530 357V403Q532 460 545 480L562 497 524 511z" />
								<path fill="#00aee4" d="M546 337C560 324 580 324 598 329 622 343 632 375 632 400S627 450 624 470L600 483 550 486Q534 450 531 403T546 337z" />
								<path fill="#00c2dc" d="M548 337C560 328 580 328 595 332 618 345 628 375 628 400S625 450 620 470L595 479 555 480Q538 450 536 403T548 337z" />
								<path fill="#00c878" d="M552 346C572 348 590 355 600 375 608 395 608 410 600 436S570 470 548 472Q538 440 538 410T552 346z" />
								<path fill="#08c00a" d="M551 356Q573 364 582 382C590 400 590 412 584 430S562 459 548 461Q541 430 541 410T551 356z" />
								<path fill="#8cc814" d="M550 368Q570 382 573 410T552 452Q543 430 544 410T550 368z" />
								<path fill="#f4e010" d="M552 380Q561 394 561 410T552 438Q546 425 546 405T552 380z" />
								<path fill="none" stroke="#c07010" stroke-width="1" stroke-dasharray="1 4" d="M552 400L550 420" />
								{@render slab()}
								<path fill="#1a28ea" d="M475 302L525 294 533 298 540 330 530 357 528 403Q530 460 542 480L560 497 527 513z" />
								<path fill="#1850e0" d="M482 301L516 296 532 375 532 420 545 478 528 478 510 400z" />
								<path fill="#1284c8" d="M492 299L503 297 531 385 531 440 520 420z" />
								<path fill="#1a1ecc" d="M475 302L487 300 512 400 528 480 524 510z" />
								<path fill="#1a26f4" d="M458 312L468 309V302L475 301 500 405 520 490 527 513 498 518z" />
								<path fill="none" stroke="#a088b8" stroke-width=".8" d="M475 303L521 494Q526 502 536 496M524 516Q533 508 545 504L787 418" />
								<path fill="none" stroke="#20265c" stroke-width=".8" d="M394 334L458 312 499 518M458 312L468 309V302L525 294 533 298 558 291 787 233" />
							{/if}
							<g class="triad">
								<path d="M706 630L732 625 739 650 712 656zM706 630L712 635 737 631M712 635V656" />
								<path d="M719 627L715 606" stroke="#c04030" stroke-width="3" />
								<path d="M710 607L713 597 719 606z" fill="#c04030" stroke="none" />
								<path d="M735 637L754 631" stroke="#3c8c3c" stroke-width="3" />
								<path d="M752 626L765 628 755 637z" fill="#308038" stroke="none" />
								<text x="707" y="594" class="x">X</text>
								<text x="767" y="629" class="y">Y</text>
							</g>
						</svg>
						<div class="info">
							{#each view.lines as line}<span>{line}</span>{/each}
						</div>
						<div class="legend">
							<div class="colors">
								{#each { length: 12 }}<i></i>{/each}
							</div>
							<div class="values">
								{#each legend as value}<span>{value}</span>{/each}
							</div>
						</div>
						<div class="unit">[lbf/in²]</div>
					</article>
				{/each}
			</div>
		</section>

		<aside class="shortcuts">
			{#each shortcuts as name}
				<button aria-label={name}>{@render icon(name)}</button>
			{/each}
		</aside>
	</main>

	<footer>{@render icon('bell')}<span>1 Notification</span></footer>
</div>

<style>
	:global(body) {
		margin: 0;
		font-family: Lato, 'Noto Sans', sans-serif;
		font-size: 8px;
		line-height: 9px;
		color: #2c2c2c;
	}
	:global(.k) {
		fill: none;
		stroke: #444;
	}
	:global(.b) {
		fill: none;
		stroke: #46607c;
	}
	:global(.g) {
		fill: none;
		stroke: #b4b4b4;
	}
	:global(.w) {
		fill: none;
		stroke: #d8ecf8;
		stroke-width: 1.5;
	}
	:global(.w2) {
		fill: none;
		stroke: #fff;
		stroke-width: 2;
	}
	.defs {
		position: absolute;
		width: 0;
		height: 0;
	}
	.app {
		box-sizing: border-box;
		height: 100vh;
		display: flex;
		flex-direction: column;
		border-top: 1px solid #0a1420;
		border-bottom: 1px solid #000;
		background: #fff;
	}
	button {
		display: flex;
		align-items: center;
		gap: 4px;
		padding: 0;
		border: 0;
		background: none;
		font: inherit;
		color: inherit;
		white-space: nowrap;
	}
	.icon {
		flex: none;
		width: 12px;
		height: 12px;
	}
	.caret {
		flex: none;
		border: 2px solid transparent;
		border-top-color: currentColor;
		border-bottom: 0;
	}

	header {
		background: #00689e;
		color: #e8f4fc;
		font-family: 'Noto Sans', 'Open Sans', sans-serif;
	}
	.title {
		height: 15px;
		display: flex;
		align-items: center;
		gap: 9px;
		padding: 0 3px 0 1px;
	}
	.nx {
		font: bold 15px/15px 'Open Sans', sans-serif;
		color: #fff;
	}
	.title .window {
		margin-left: -7px;
		gap: 2px;
	}
	.window .caret {
		margin-left: 2px;
	}
	.title .custom {
		margin-left: -4px;
	}
	h1 {
		flex: 1;
		margin: 0;
		font: inherit;
		text-align: center;
	}
	.brand {
		font: bold 9px/10px 'Open Sans', sans-serif;
		color: #fff;
	}
	.controls {
		display: flex;
		gap: 4px;
		margin-left: 5px;
	}
	nav {
		height: 20px;
		display: flex;
		align-items: center;
		gap: 2px;
		padding: 0 3px 0 2px;
	}
	nav button {
		box-sizing: border-box;
		height: 18px;
		padding: 0 10px;
		border-bottom: 2px solid transparent;
	}
	nav button:first-child {
		margin-right: 4px;
	}
	nav .active {
		color: #c8cc5c;
		border-color: #b4b84c;
	}
	nav .tool {
		padding: 0;
		margin-left: 3px;
	}
	.find {
		box-sizing: border-box;
		width: 106px;
		height: 12px;
		margin: 0 2px 0 auto;
		display: flex;
		align-items: center;
		background: #fff;
	}
	.find input {
		flex: 1;
		min-width: 0;
		padding: 0 2px;
		border: 0;
		background: none;
		font: inherit;
		font-size: 7px;
	}
	.find input::placeholder {
		color: #aaa;
	}

	.ribbon {
		display: flex;
		border-bottom: 1px solid #d4d4d4;
	}
	.group {
		box-sizing: border-box;
		height: 58px;
		padding-top: 2px;
		border-right: 1px solid #e4e4e4;
	}
	.body {
		display: grid;
		grid-template-rows: 22px 22px;
		grid-auto-flow: column;
	}
	.context {
		width: 79px;
	}
	.context .body {
		grid-template-columns: 46px 24px;
	}
	.layout {
		width: 61px;
	}
	.layout .body {
		grid-template-columns: 38px 16px;
	}
	.operation {
		width: 92px;
	}
	.operation .body {
		padding-left: 5px;
		grid-template-columns: 40px 20px 24px;
	}
	.post {
		width: 97px;
	}
	.post .body {
		padding-left: 4px;
		grid-template-columns: 38px 32px 22px;
	}
	.display {
		width: 122px;
	}
	.display .body {
		grid-template-columns: 34px 22px 24px 40px;
	}
	.result {
		width: 90px;
	}
	.result .body {
		padding-left: 4px;
		grid-template-columns: 24px 24px 32px;
	}
	.tools {
		width: 115px;
	}
	.tools .body {
		padding-left: 6px;
		grid-template-columns: 32px 26px 20px 30px;
	}
	.animation {
		width: 94px;
	}
	.animation .body {
		padding-left: 4px;
		grid-template-columns: 40px 16px 15px 15px;
	}
	.manipulation {
		width: 68px;
	}
	.manipulation .body {
		grid-template-columns: 36px 18px;
	}
	.function {
		width: 168px;
	}
	.function .body {
		padding-left: 4px;
		grid-template-columns: 43px 22px 22px 22px 22px 33px;
	}
	.big {
		grid-row: span 2;
		flex-direction: column;
		gap: 0;
		padding-top: 2px;
		min-width: 0;
	}
	.big .icon {
		width: 21px;
		height: 21px;
		margin-bottom: 3px;
	}
	.big span {
		display: flex;
		align-items: center;
		gap: 3px;
		min-height: 9px;
	}
	.off {
		color: #bbb;
	}
	.small {
		display: grid;
		grid-template-columns: 1fr 20px 1fr;
		gap: 0;
	}
	.small .caret {
		justify-self: start;
	}
	.tile {
		grid-column: 2;
		height: 20px;
		display: grid;
		place-items: center;
	}
	.tile .icon {
		width: 16px;
		height: 16px;
	}
	.animation .tile .icon {
		width: 12px;
		height: 12px;
	}
	.on .tile,
	.bar .on {
		background: #c4dfea;
	}
	.stack {
		grid-row: span 2;
		display: flex;
		flex-direction: column;
		justify-content: space-evenly;
		align-items: center;
	}
	.stack .icon {
		width: 12px;
		height: 12px;
	}
	.label {
		display: flex;
		align-items: center;
		height: 12px;
		padding-right: 5px;
		color: #2c6c94;
	}
	.label span {
		flex: 1;
		text-align: center;
	}
	.label .caret {
		color: #222;
	}
	.end {
		margin: auto 4px 6px auto;
	}

	.bar {
		height: 18px;
		display: flex;
		align-items: center;
		gap: 4px;
		padding-left: 6px;
		border-bottom: 1px solid #e0e0e0;
	}
	.bar .icon {
		width: 12px;
		height: 12px;
	}
	.bar .menu {
		padding-right: 6px;
		margin-right: 3px;
		border-right: 1px solid #ddd;
	}
	.bar .menu .icon {
		width: 8px;
		height: 8px;
	}
	.bar hr {
		height: 12px;
		margin: 0 5px;
		border: 0;
		border-left: 1px solid #ddd;
	}
	.bar .first {
		margin-left: 5px;
	}
	.pick {
		box-sizing: border-box;
		width: 94px;
		height: 14px;
		display: flex;
		align-items: center;
		padding-right: 3px;
		border: 1px solid #999;
	}
	.pick select {
		flex: 1;
		min-width: 0;
		padding: 0 1px;
		border: 0;
		background: none;
		appearance: none;
		font: inherit;
		color: inherit;
	}

	main {
		flex: 1;
		min-height: 0;
		display: flex;
	}
	.rail {
		box-sizing: border-box;
		width: 20px;
		display: flex;
		flex-direction: column;
		background: #d8d8d8;
		border-right: 1px solid #aaa;
	}
	.rail button {
		height: 28px;
		justify-content: center;
	}
	.rail .icon {
		width: 16px;
		height: 16px;
	}
	.rail .gear {
		height: 18px;
		margin-bottom: 10px;
	}
	.rail .gear .icon {
		width: 10px;
		height: 10px;
	}
	.rail .active {
		background: #fff;
	}
	.low {
		display: flex;
		flex-direction: column;
		padding-top: 8px;
		gap: 4px;
	}

	.navigator {
		width: 296px;
		display: flex;
		flex-direction: column;
		background: #fff;
	}
	h2 {
		display: flex;
		align-items: center;
		justify-content: space-between;
		height: 20px;
		margin: 0;
		padding: 0 11px 0 7px;
		font: inherit;
	}
	h2 button {
		width: 8px;
		height: 8px;
		border: 1px solid #222;
		border-top-width: 2px;
	}
	.pane {
		flex: 1;
		min-height: 0;
		display: grid;
		grid-template: minmax(0, 1fr) 10px / 1fr 12px;
		margin: 0 6px 7px 5px;
	}
	table {
		grid-area: 1 / 1 / 2 / 3;
		display: flex;
		flex-direction: column;
		min-height: 0;
		overflow: hidden;
	}
	tr {
		display: grid;
		grid-template-columns: 1fr 34px 17px;
		min-height: 0;
	}
	thead tr {
		grid-template-columns: 1fr 34px 29px;
	}
	th {
		height: 13px;
		padding: 0 4px;
		border-right: 1px solid #ddd;
		background: #f0f0f0;
		font-weight: normal;
		line-height: 13px;
		text-align: left;
		white-space: nowrap;
	}
	th:last-child {
		padding: 0 0 0 2px;
		border: 0;
	}
	tbody {
		flex: 1;
		min-height: 0;
		display: grid;
		grid-auto-rows: minmax(0, 1fr);
		margin: 0 12px -5px 0;
	}
	tbody tr {
		border-bottom: 1px solid #f0f0f0;
	}
	tbody tr:nth-child(even) {
		background: #fafafa;
	}
	td {
		display: flex;
		align-items: center;
		min-width: 0;
		padding: 0 0 0 2px;
		border-right: 1px solid #eaeaea;
		white-space: nowrap;
		overflow: hidden;
	}
	td:first-child {
		padding: 0;
	}
	td:last-child {
		border: 0;
	}
	td .icon {
		width: 10px;
		height: 10px;
		margin-right: 1px;
	}
	.name {
		padding-left: 2px;
	}
	.guide {
		flex: none;
		width: 6px;
		height: 14px;
		margin-right: 6px;
		border-right: 1px solid transparent;
	}
	.guide.line {
		border-right: 1px dotted #bbb;
	}
	.exp {
		flex: none;
		justify-content: center;
		width: 12px;
		font-weight: bold;
		color: #555;
	}
	td input {
		flex: none;
		box-sizing: border-box;
		width: 10px;
		height: 10px;
		display: grid;
		place-items: center;
		margin: 0 1px;
		appearance: none;
		border: 1px solid #555;
		background: #fff;
	}
	td input:checked::before {
		content: '';
		width: 2px;
		height: 5px;
		margin-bottom: 1px;
		border: solid #222;
		border-width: 0 1px 1px 0;
		transform: rotate(40deg);
	}
	.blue {
		color: #2c34b0;
	}
	.selected td {
		background: #86bcd0;
	}
	.selected td:first-child {
		background: linear-gradient(90deg, #fff 36px, #86bcd0 36px);
	}
	.vscroll {
		grid-area: 1 / 2;
		display: flex;
		flex-direction: column;
		align-items: center;
		margin-top: 13px;
		padding: 5px 0 4px;
		background: #f2f2f2;
	}
	.vscroll span {
		width: 10px;
		flex: 58%;
		background: #cdcdcd;
	}
	.hscroll {
		grid-column: span 2;
		display: flex;
		align-items: center;
		gap: 5px;
		padding: 0 15px 0 5px;
		background: #f2f2f2;
	}
	.hscroll span {
		width: 102px;
		height: 10px;
		background: #cdcdcd;
	}
	b {
		flex: none;
		width: 3px;
		height: 3px;
		border: solid #333;
		border-width: 1px 0 0 1px;
		transform: rotate(45deg);
	}
	.up {
		margin-bottom: 190px;
	}
	.down {
		margin-top: 18px;
		transform: rotate(225deg);
	}
	.prev {
		transform: rotate(-45deg);
	}
	.next {
		margin-left: auto;
		transform: rotate(135deg);
	}

	.work {
		flex: 1;
		min-width: 0;
		display: flex;
		flex-direction: column;
		border-left: 1px solid #889;
	}
	.docs {
		height: 16px;
		display: flex;
		border-bottom: 2px solid #2c4c68;
	}
	.docs button {
		padding: 0 14px 0 3px;
		gap: 3px;
	}
	.docs .icon {
		width: 11px;
		height: 11px;
	}
	.docs .icon + span + .icon {
		width: 8px;
		height: 8px;
		margin-left: 1px;
	}
	.docs .active {
		background: #005a8c;
		color: #fff;
		padding-right: 4px;
	}
	.docs .active .icon:last-child {
		width: 8px;
		height: 8px;
	}
	.rest {
		margin: auto 2px auto auto;
	}
	.views {
		flex: 1;
		min-height: 0;
		display: grid;
		grid-template-columns: 1fr 1fr;
	}
	article {
		position: relative;
		overflow: hidden;
		box-sizing: border-box;
		padding: 2px 3px;
		border: 2px solid #e4ae88;
		background: linear-gradient(#b3b4b5, #cdcecf 50%, #e9ebed);
		font: 11px/12px 'Liberation Sans', Arial, sans-serif;
		color: #3c4866;
	}
	article.s2 {
		border-color: #e07860;
	}
	.scene {
		position: absolute;
		inset: -2px;
		width: calc(100% + 4px);
		height: calc(100% + 4px);
	}
	.info,
	.legend,
	.unit {
		position: relative;
	}
	.info {
		display: grid;
		grid-auto-rows: 1fr;
		height: 76px;
	}
	.legend {
		display: flex;
		gap: 6px;
		margin-top: 27px;
	}
	.colors {
		display: flex;
		flex-direction: column;
		gap: 1px;
		width: 9px;
		height: 402px;
		margin-top: 6px;
	}
	.colors i {
		flex: 1;
		background: #1010f0;
	}
	.colors i:nth-child(1) { background: #f81c08; }
	.colors i:nth-child(2) { background: #fc7008; }
	.colors i:nth-child(3) { background: #fc9c08; }
	.colors i:nth-child(4) { background: #fcf008; }
	.colors i:nth-child(5) { background: #88dc08; }
	.colors i:nth-child(6) { background: #08cc08; }
	.colors i:nth-child(7) { background: #08d880; }
	.colors i:nth-child(8) { background: #08e8f8; }
	.colors i:nth-child(9) { background: #08acf8; }
	.colors i:nth-child(10) { background: #0880f0; }
	.colors i:nth-child(11) { background: #0848f0; }
	.values {
		display: flex;
		flex-direction: column;
		justify-content: space-between;
		margin-bottom: -6px;
	}
	.unit {
		margin-top: 27px;
	}
	.triad {
		fill: none;
		stroke: #a0a4a8;
	}
	.triad text {
		font-size: 8px;
		stroke: none;
	}
	.x {
		fill: #b84c40;
	}
	.y {
		fill: #40884c;
	}

	.shortcuts {
		box-sizing: border-box;
		width: 24px;
		height: 224px;
		padding: 5px 0 4px;
		display: grid;
		justify-content: center;
		border-bottom: 1px solid #ddd;
	}
	.shortcuts .icon {
		width: 16px;
		height: 16px;
	}

	footer {
		height: 13px;
		display: flex;
		align-items: center;
		justify-content: flex-end;
		gap: 3px;
		padding-right: 36px;
		border-top: 1px solid #bbb;
	}
	footer .icon {
		width: 10px;
		height: 10px;
	}
</style>
